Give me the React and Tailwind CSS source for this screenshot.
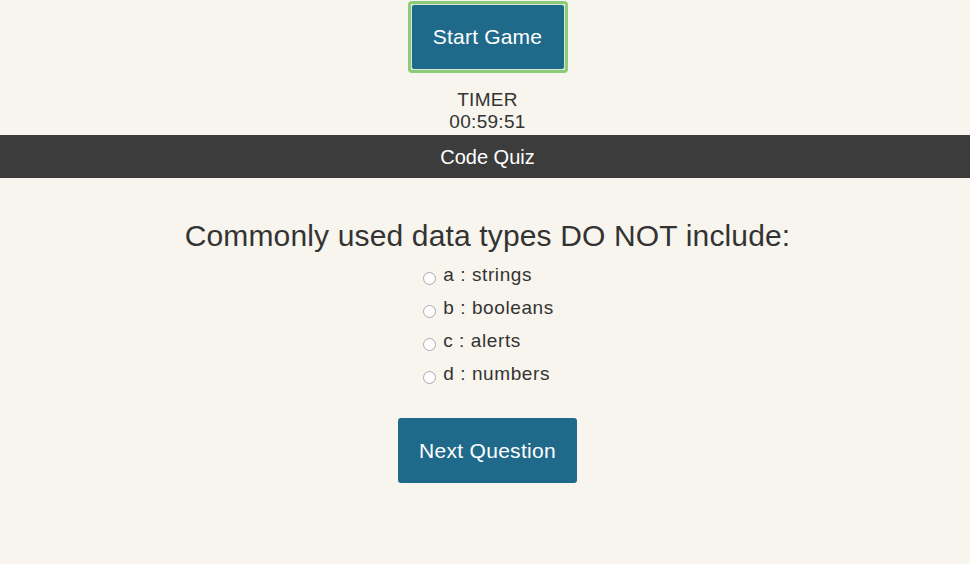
export default function App() {
  const opts = ["a : strings", "b : booleans", "c : alerts", "d : numbers"];
  return (
    <div className="min-h-[564px] w-full bg-[#f8f5ee] text-[#333333] flex flex-col items-center pl-[5px]" style={{ fontFamily: '"Liberation Sans", Arial, sans-serif' }}>
      <div className="mt-[1px] rounded-[4px] border-[3px] border-[#8ccb79] p-0">
        <button className="w-[154px] h-[66px] bg-[#1f6a8b] text-white text-[21px] tracking-[0.2px] rounded-[3px] border border-[#d9e6d3] flex items-center justify-center">
          Start Game
        </button>
      </div>
      <div className="mt-[16px] flex flex-col items-center text-[19px] leading-[22px] tracking-[0.3px] text-[#333333]">
        <div>TIMER</div>
        <div>00:59:51</div>
      </div>
      <div className="mt-[2px] w-[calc(100%+5px)] -ml-[5px] h-[43px] bg-[#3c3c3c] flex items-center justify-center text-white text-[20px] pl-[5px]">
        Code Quiz
      </div>
      <div className="mt-[42px] text-[30px] leading-[32px] tracking-[0.15px] text-[#333333]">
        Commonly used data types DO NOT include:
      </div>
      <div className="mt-[7px] flex flex-col">
        {opts.map((o) => (
          <label key={o} className="flex items-center h-[33px] text-[19px] tracking-[0.6px] text-[#333333]">
            <span className="mt-[5px] ml-[2px] mr-[7px] w-[13px] h-[13px] rounded-full border border-[#a9a9a9] bg-white"></span>
            {o}
          </label>
        ))}
      </div>
      <button className="mt-[27px] w-[179px] h-[65px] bg-[#1f6a8b] text-white text-[21px] tracking-[0.3px] rounded-[3px] flex items-center justify-center">
        Next Question
      </button>
    </div>
  );
}
